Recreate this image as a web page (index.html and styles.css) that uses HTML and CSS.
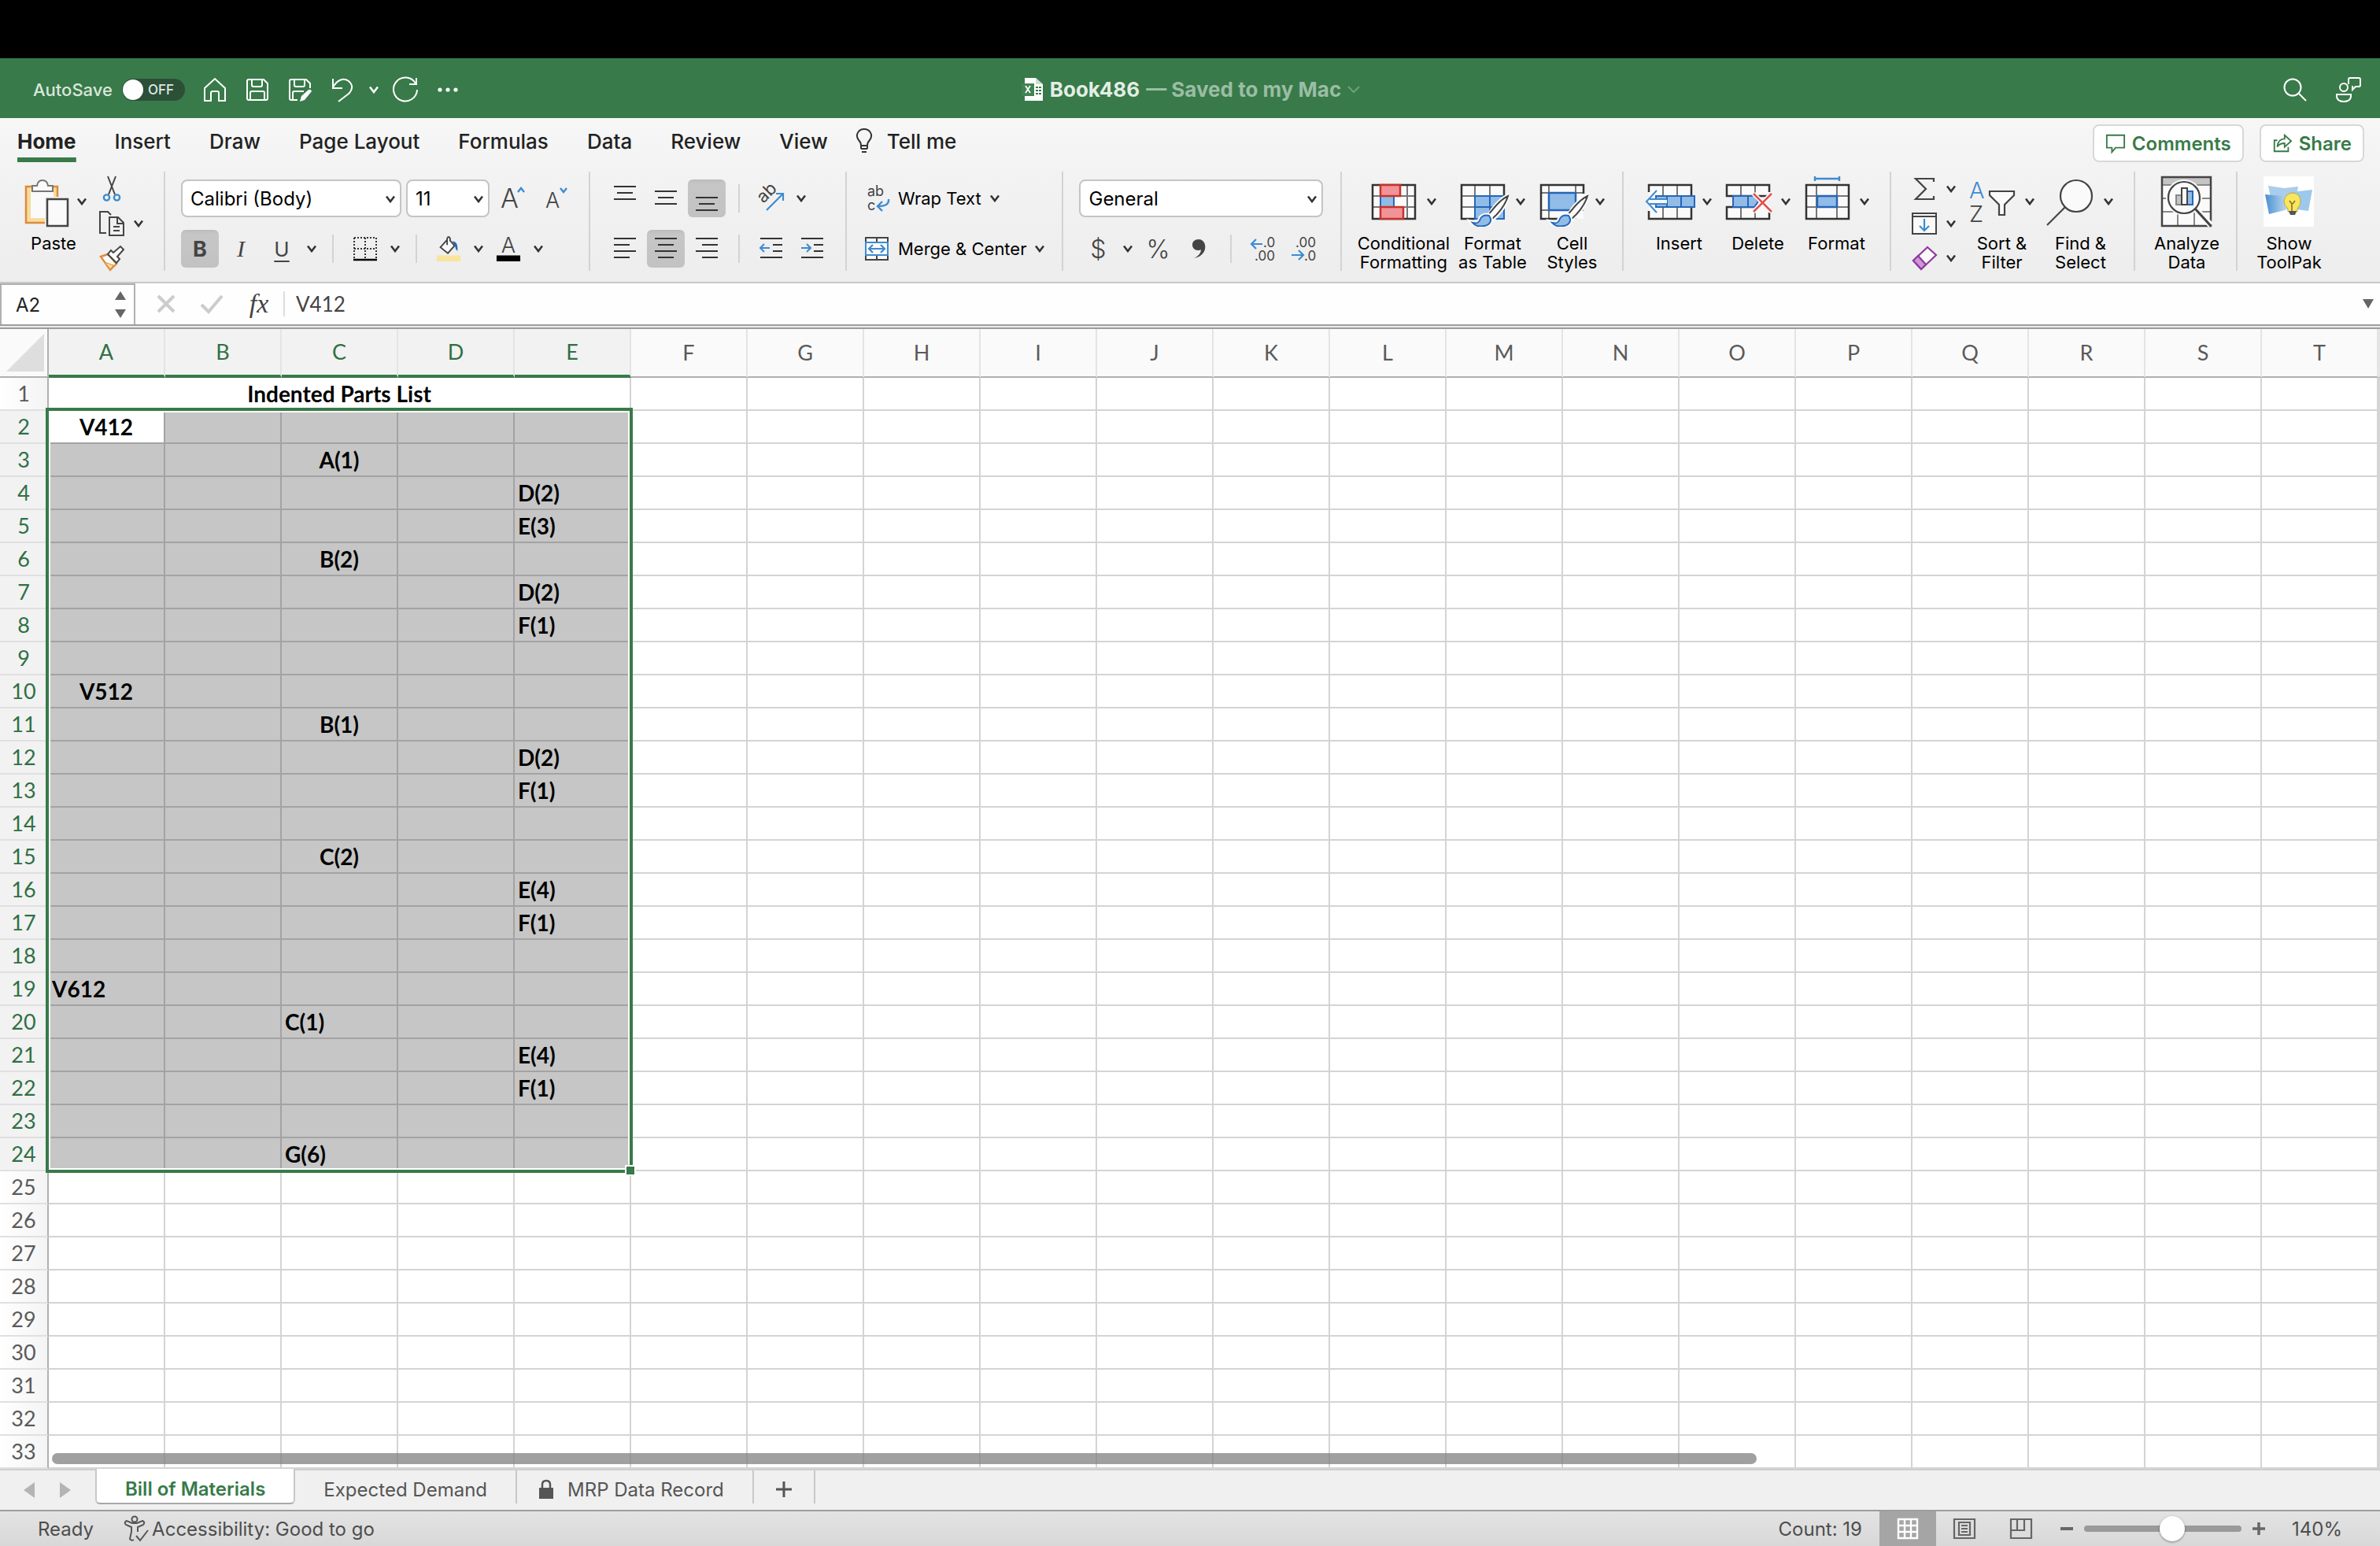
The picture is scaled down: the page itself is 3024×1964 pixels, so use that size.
FILE: index.html
```html
<!DOCTYPE html>
<html lang="en">
<head>
  <meta charset="UTF-8">
  <meta name="viewport" content="width=device-width, initial-scale=1.0">
  <title>Book486</title>
  <link rel="stylesheet" href="styles.css">
</head>
<body>
<svg class="defs" aria-hidden="true">
  <symbol id="chev" viewBox="0 0 12 10"><path d="M1 1.5 6 8 11 1.5" fill="none" stroke="currentColor" stroke-width="2.6"/></symbol>
  <symbol id="brush" viewBox="0 0 64 64">
    <path d="M62 25C52 30 44 40 38 50l5 4C51 46 59 36 62 25z" fill="#fafafa" stroke="#fafafa" stroke-width="6"/>
    <path d="M62 25C53 29 45 39 37 49l5 5C51 46 59 35 62 25z" fill="#fafafa" stroke="#444" stroke-width="2"/>
    <path d="M38 50c-7-2-11 2-12 6-1 3-5 4-9 3 4 5 10 5 15 4 6-1 11-6 6-13z" fill="#91bce8" stroke="#fafafa" stroke-width="6"/>
    <path d="M38 50c-7-2-11 2-12 6-1 3-5 4-9 3 4 5 10 5 15 4 6-1 11-6 6-13z" fill="#91bce8" stroke="#2666b8" stroke-width="2"/>
  </symbol>
</svg>

<div class="notch"></div>
<header class="titlebar">
  <div class="quick">
    <span class="autosave" id="autosave-label">AutoSave</span>
    <button class="toggle" aria-labelledby="autosave-label"><i class="knob"></i>OFF</button>
    <button class="qbtn" aria-label="Home"><svg viewBox="0 0 32 32"><path d="M3 30V14L16 2l13 12v16h-8V20q0-2-2-2h-6q-2 0-2 2v10z"/></svg></button>
    <button class="qbtn" aria-label="Save"><svg viewBox="0 0 32 32"><path d="M5 3h19l5 5v19q0 2-2 2H5q-2 0-2-2V5q0-2 2-2zM9 3v7q0 2 2 2h9q2 0 2-2V3M7 29V20q0-2 2-2h14q2 0 2 2v9"/></svg></button>
    <button class="qbtn" aria-label="Save as"><svg viewBox="0 0 32 32"><path d="M13 29H5q-2 0-2-2V5q0-2 2-2h19l5 5v6M9 3v7q0 2 2 2h9q2 0 2-2V3M7 29V20q0-2 2-2h12"/><path d="M16 31l2-7 9-8q3-1 4 2l-9 11z" fill="#fff" stroke="none"/></svg></button>
    <button class="qbtn" aria-label="Undo"><svg viewBox="0 0 32 32"><path d="M4 2v12h12M4 13C9 4 17 0 24 5c6 5 5 11 0 16L11 31"/></svg></button>
    <button class="qchev" aria-label="Undo history"><svg class="chev"><use href="#chev"/></svg></button>
    <button class="qbtn" aria-label="Redo"><svg viewBox="0 0 32 32"><path d="M21 9h9V1M29 8A15 15 0 1 0 31 16"/></svg></button>
    <button class="qbtn" aria-label="More"><svg viewBox="0 0 32 32"><g fill="#fff" stroke="none"><circle cx="6" cy="16" r="2.6"/><circle cx="16" cy="16" r="2.6"/><circle cx="26" cy="16" r="2.6"/></g></svg></button>
  </div>
  <div class="doc">
    <svg class="docicon" viewBox="0 0 28 32"><path d="M4 1h14l9 8v21H4z" fill="#fff"/><path d="M18 1v8h9z" fill="#cfdcd2"/><path d="M0 8h16v16H0z" fill="#3f8452"/><path d="M5 11l6 9M11 11l-6 9" stroke="#fff" stroke-width="1.8"/><path d="M18 12h3v2h-3zM22 12h3v2h-3zM18 16h3v2h-3zM22 16h3v2h-3zM18 20h3v2h-3zM22 20h3v2h-3z" fill="#387a49"/></svg>
    <span class="docname">Book486</span>
    <span class="saved">— Saved to my Mac</span>
    <svg class="savedchev" viewBox="0 0 16 10"><path d="M1 1 8 8 15 1" fill="none" stroke="currentColor" stroke-width="2"/></svg>
  </div>
  <div class="right">
    <button class="qbtn" aria-label="Search"><svg viewBox="0 0 32 32"><circle cx="13" cy="13" r="10.5"/><path d="M21 21l9 9"/></svg></button>
    <button class="qbtn" aria-label="Collaboration"><svg viewBox="0 0 32 32"><circle cx="10" cy="13" r="5"/><path d="M1 22h18v3q-1 6-9 6t-9-6zM18 1h11q2 0 2 2v7q0 2-2 2h-4l-4 4v-4h-1M16 9V3q0-2 2-2"/></svg></button>
  </div>
</header>

<nav class="tabs">
  <button class="tab on">Home</button>
  <button class="tab">Insert</button>
  <button class="tab">Draw</button>
  <button class="tab">Page Layout</button>
  <button class="tab">Formulas</button>
  <button class="tab">Data</button>
  <button class="tab">Review</button>
  <button class="tab">View</button>
  <button class="tab tell"><svg viewBox="0 0 22 32"><path d="M7 22q0-4-3-7C-1 8 4 1 11 1s12 7 7 14q-3 3-3 7zM7 26h8M7 22v4M15 22v4M8 30h6" fill="none" stroke="#333" stroke-width="2"/></svg>Tell me</button>
  <div class="tabactions">
    <button class="pill"><svg viewBox="0 0 28 28"><path d="M2 3h24v17H14l-5 6v-6H2z"/></svg>Comments</button>
    <button class="pill"><svg viewBox="0 0 28 28"><path d="M7 10H3v15h19v-6M17 3l9 8-9 8v-5q-7 0-10 5 1-11 10-11z"/></svg>Share</button>
  </div>
</nav>

<section class="ribbon">
  <div class="group">
    <button class="big w96">
      <span class="pic"><svg viewBox="0 0 64 64"><path d="M7 13h40v46H7z" fill="#f6dd9c" stroke="#df8a3c" stroke-width="2.5"/><path d="M13 19h29v34H13z" fill="#fafafa"/><path d="M15 12h6q1-7 7-7t7 7h6v7H15z" fill="#fafafa" stroke="#777" stroke-width="2"/><path d="M31 26h31v38H31z" fill="#f2f2f2"/><path d="M34 29h26v34H34z" fill="#fafafa" stroke="#444" stroke-width="2.5"/></svg><svg class="chev"><use href="#chev"/></svg></span>
      Paste
    </button>
    <div class="stack">
      <button class="mini" aria-label="Cut"><svg viewBox="0 0 32 32"><path d="M11 0l9 23M21 0l-9 23" fill="none" stroke="#444" stroke-width="2"/><g fill="none" stroke="#3e8bd0" stroke-width="2.4"><circle cx="9.5" cy="27" r="3.6"/><circle cx="22.5" cy="27" r="3.6"/></g></svg></button>
      <button class="mini" aria-label="Copy"><svg viewBox="0 0 32 32"><path d="M9 28H1V1h10l4 4M13 8h11l7 7v16H13zM23 8v8h8M18 20h8M18 25h8" fill="none" stroke="#444" stroke-width="2"/></svg><svg class="chev"><use href="#chev"/></svg></button>
      <button class="mini" aria-label="Format painter"><svg viewBox="0 0 32 32"><path d="M2 14l9-3 11 12-8 8z" fill="#fafafa" stroke="#df8a3c" stroke-width="2.4"/><path d="M7 21l11 4-4 5z" fill="#f6dd9c" stroke="#df8a3c"/><path d="M11 11L22 22l4-5-3-3 8-9-4-4-9 8-3-3z" fill="#fafafa" stroke="#444" stroke-width="2"/></svg></button>
    </div>
  </div>

  <div class="group">
    <div class="rows">
      <div class="row fields">
        <span class="field font"><select aria-label="Font"><option>Calibri (Body)</option></select><svg class="chev"><use href="#chev"/></svg></span>
        <span class="field size"><select aria-label="Font size"><option>11</option></select><svg class="chev"><use href="#chev"/></svg></span>
        <button class="btn" aria-label="Increase font size"><svg viewBox="0 0 32 32"><text x="0" y="28" font-size="34" font-weight="300" fill="#444">A</text><path d="M22 8l4-5 4 5" fill="none" stroke="#3e8bd0" stroke-width="2.4"/></svg></button>
        <button class="btn" aria-label="Decrease font size"><svg viewBox="0 0 32 32"><text x="3" y="28" font-size="27" font-weight="300" fill="#444">A</text><path d="M22 3l4 5 4-5" fill="none" stroke="#3e8bd0" stroke-width="2.4"/></svg></button>
      </div>
      <div class="row">
        <button class="btn pressed bold">B</button>
        <button class="btn italic">I</button>
        <button class="btn under">U</button>
        <button class="drop" aria-label="Underline style"><svg class="chev"><use href="#chev"/></svg></button>
        <i class="bar"></i>
        <button class="btn" aria-label="Borders"><svg viewBox="0 0 32 32"><path d="M2 2h28M2 16h28M2 2v26M16 2v26M30 2v26" fill="none" stroke="#333" stroke-width="2" stroke-dasharray="2 2"/><path d="M1 30h30" stroke="#000" stroke-width="2.5"/></svg></button>
        <button class="drop" aria-label="Border style"><svg class="chev"><use href="#chev"/></svg></button>
        <i class="bar"></i>
        <button class="btn" aria-label="Fill color"><svg viewBox="0 0 32 34"><path d="M14 5L5 15l10 8 9-10-6-7V3q-2-4-4 0v9" fill="#fafafa" stroke="#444" stroke-width="2"/><path d="M21 7q8 0 7 13-3-2-3-6z" fill="#2666b8"/><path d="M0 26h32v8H0z" fill="#f9e49c"/></svg></button>
        <button class="drop" aria-label="Fill colors"><svg class="chev"><use href="#chev"/></svg></button>
        <button class="btn" aria-label="Font color"><svg viewBox="0 0 32 34"><text x="16" y="22" font-size="29" font-weight="300" text-anchor="middle" fill="#444">A</text><path d="M0 26h32v8H0z" fill="#000"/></svg></button>
        <button class="drop" aria-label="Font colors"><svg class="chev"><use href="#chev"/></svg></button>
      </div>
    </div>
  </div>

  <div class="group">
    <div class="rows">
      <div class="row">
        <button class="btn lines" aria-label="Top align"><svg viewBox="0 0 32 32"><path d="M2 1h28M6 9h20M2 17h28"/></svg></button>
        <button class="btn lines" aria-label="Middle align"><svg viewBox="0 0 32 32"><path d="M2 7h28M6 15h20M2 23h28"/></svg></button>
        <button class="btn lines pressed" aria-label="Bottom align"><svg viewBox="0 0 32 32"><path d="M2 15h28M6 23h20M2 31h28"/></svg></button>
        <i class="bar"></i>
        <button class="btn" aria-label="Orientation"><svg viewBox="0 0 32 32"><text x="0" y="0" font-size="22" fill="#444" transform="translate(6 23) rotate(-45)">ab</text><path d="M10 31L30 11M22 10h9v9" fill="none" stroke="#3e8bd0" stroke-width="2.2"/></svg></button>
        <button class="drop" aria-label="Orientation options"><svg class="chev"><use href="#chev"/></svg></button>
      </div>
      <div class="row">
        <button class="btn lines" aria-label="Align left"><svg viewBox="0 0 32 32"><path d="M2 3h28M2 11h20M2 19h28M2 27h20"/></svg></button>
        <button class="btn lines pressed" aria-label="Center"><svg viewBox="0 0 32 32"><path d="M2 3h28M6 11h20M2 19h28M6 27h20"/></svg></button>
        <button class="btn lines" aria-label="Align right"><svg viewBox="0 0 32 32"><path d="M2 3h28M10 11h20M2 19h28M10 27h20"/></svg></button>
        <i class="bar"></i>
        <button class="btn lines" aria-label="Decrease indent"><svg viewBox="0 0 32 32"><path d="M2 3h28M18 11h12M18 19h12M2 27h28"/><path class="blue" d="M14 15H3M7 10l-5 5 5 5"/></svg></button>
        <button class="btn lines" aria-label="Increase indent"><svg viewBox="0 0 32 32"><path d="M2 3h28M18 11h12M18 19h12M2 27h28"/><path class="blue" d="M2 15h11M9 10l5 5-5 5"/></svg></button>
      </div>
    </div>
  </div>

  <div class="group">
    <div class="rows">
      <button class="wide"><svg viewBox="0 0 32 32"><text x="4" y="13" font-size="18" fill="#444">ab</text><text x="4" y="31" font-size="18" fill="#444">c</text><path d="M31 17q1 9-13 9M23 20l-6 6 6 6" fill="none" stroke="#3e8bd0" stroke-width="2.4"/></svg>Wrap Text<svg class="chev"><use href="#chev"/></svg></button>
      <button class="wide"><svg viewBox="0 0 32 32"><path d="M2 2h28v28H2zM16 2v6M16 24v6" fill="#fafafa" stroke="#444" stroke-width="2"/><path d="M2 8h28v16H2z" fill="#fafafa" stroke="#3e8bd0" stroke-width="2"/><path d="M6 16h20M11 11l-5 5 5 5M21 11l5 5-5 5" fill="none" stroke="#3e8bd0" stroke-width="2.2"/></svg>Merge &amp; Center<svg class="chev"><use href="#chev"/></svg></button>
    </div>
  </div>

  <div class="group numbers">
    <div class="rows">
      <span class="field number"><select aria-label="Number format"><option>General</option></select><svg class="chev"><use href="#chev"/></svg></span>
      <div class="row">
        <button class="btn sign">$</button>
        <button class="drop" aria-label="Currency"><svg class="chev"><use href="#chev"/></svg></button>
        <button class="btn sign">%</button>
        <button class="btn" aria-label="Comma style"><svg viewBox="0 0 32 32"><path d="M16 4c-5 0-8 3-8 7s3 7 7 7q3 0 4-1 0 7-9 11C24 25 25 16 24 11c-1-4-4-7-8-7z" fill="#444"/></svg></button>
        <i class="bar"></i>
        <button class="btn" aria-label="Increase decimal"><svg viewBox="0 0 32 32"><text x="16" y="14" font-size="17" fill="#444">.0</text><text x="5" y="31" font-size="17" fill="#444">.00</text><path d="M15 10H1M7 4l-6 6 6 6" fill="none" stroke="#3e8bd0" stroke-width="2.2"/></svg></button>
        <button class="btn" aria-label="Decrease decimal"><svg viewBox="0 0 32 32"><text x="5" y="14" font-size="17" fill="#444">.00</text><text x="16" y="31" font-size="17" fill="#444">.0</text><path d="M0 24h15M9 18l6 6-6 6" fill="none" stroke="#3e8bd0" stroke-width="2.2"/></svg></button>
      </div>
    </div>
  </div>

  <div class="group">
    <button class="big w116">
      <span class="pic"><svg viewBox="0 0 64 64"><path d="M3 11h54v43H3z" fill="#fafafa"/><path d="M3 25h54M3 39h54M13 11v43M47 11v43" stroke="#777" stroke-width="2"/><path d="M3 11h54v43H3z" fill="none" stroke="#333" stroke-width="2.5"/><path d="M13 25h17v14H13z" fill="#91bce8" stroke="#2666b8" stroke-width="2"/><path d="M31 26h11v12H31z" fill="#fafafa"/><path d="M13 11h25v14H13zM13 39h29v15H13z" fill="#f19499" stroke="#c8322a" stroke-width="2.5"/></svg><svg class="chev"><use href="#chev"/></svg></span>
      Conditional<br>Formatting
    </button>
    <button class="big w110">
      <span class="pic"><svg viewBox="0 0 64 64"><path d="M3 11h54v43H3z" fill="#fafafa"/><path d="M20 25h37v29H20z" fill="#91bce8"/><path d="M3 25h17M3 39h17M20 11v14M39 11v14" stroke="#777" stroke-width="2"/><path d="M20 54H3V11h54v14" fill="none" stroke="#333" stroke-width="2.5"/><path d="M57 25H20v29h37zM20 39h37M39 25v29" fill="none" stroke="#2666b8" stroke-width="2"/><use href="#brush"/></svg><svg class="chev"><use href="#chev"/></svg></span>
      Format<br>as Table
    </button>
    <button class="big w92">
      <span class="pic"><svg viewBox="0 0 64 64"><path d="M3 11h54v43H3z" fill="#fafafa"/><path d="M3 21h54M3 43h54M13 11v43M47 11v43" stroke="#777" stroke-width="2"/><path d="M57 22V11H3v43h24" fill="none" stroke="#333" stroke-width="2.5"/><path d="M13 21h34v22H13z" fill="#91bce8" stroke="#2666b8" stroke-width="2.5"/><use href="#brush"/></svg><svg class="chev"><use href="#chev"/></svg></span>
      Cell<br>Styles
    </button>
  </div>

  <div class="group">
    <button class="big">
      <span class="pic"><svg viewBox="0 0 64 64"><path d="M4 11h54v43H4z" fill="#fafafa"/><path d="M22 11v43M40 11v43" stroke="#777" stroke-width="2"/><path d="M4 20v-9h54v14M4 44v10h54V39" fill="none" stroke="#333" stroke-width="2.5"/><path d="M13 25h49v14H13z" fill="#91bce8" stroke="#2666b8" stroke-width="2"/><path d="M27 25v14M45 25v14" stroke="#2666b8" stroke-width="2"/><path d="M27 32H4" stroke="#fafafa" stroke-width="8"/><path d="M27 29H5M27 35H5M14 18L1 32l13 14" fill="none" stroke="#3e8bd0" stroke-width="2"/></svg><svg class="chev"><use href="#chev"/></svg></span>
      Insert
    </button>
    <button class="big">
      <span class="pic"><svg viewBox="0 0 64 64"><path d="M3 11h54v43H3z" fill="#fafafa"/><path d="M21 11v43M39 11v43" stroke="#777" stroke-width="2"/><path d="M0 26h64v12H0z" fill="#f2f2f2"/><path d="M57 20v-9H3v14h54M57 46v8H3V39h36" fill="none" stroke="#333" stroke-width="2.5"/><path d="M11 25h27l5 7-5 7H11zM30 25v14" fill="#91bce8" stroke="#2666b8" stroke-width="2"/><path d="M37 22l23 23M60 22L37 45" stroke="#fafafa" stroke-width="6"/><path d="M37 22l23 23M60 22L37 45" stroke="#e2504a" stroke-width="2.5"/></svg><svg class="chev"><use href="#chev"/></svg></span>
      Delete
    </button>
    <button class="big">
      <span class="pic"><svg viewBox="0 0 64 64"><path d="M4 11h54v43H4z" fill="#fafafa"/><path d="M4 25h54M4 39h54M17 11v43M43 11v43" stroke="#777" stroke-width="2"/><path d="M4 11h54v43H4z" fill="none" stroke="#333" stroke-width="2.5"/><path d="M18 25h25v14H18z" fill="#91bce8" stroke="#2666b8" stroke-width="2.5"/><path d="M15 3h31M15 0v6M46 0v6" stroke="#3e8bd0" stroke-width="2.4"/></svg><svg class="chev"><use href="#chev"/></svg></span>
      Format
    </button>
  </div>

  <div class="group">
    <div class="stack">
      <button class="mini" aria-label="AutoSum"><svg viewBox="0 0 32 32"><path d="M28 7V3H5l13 13L5 29h23v-4" fill="none" stroke="#444" stroke-width="2.2"/></svg><svg class="chev"><use href="#chev"/></svg></button>
      <button class="mini" aria-label="Fill"><svg viewBox="0 0 32 32"><path d="M1 3h30v26H1zM1 7h30" fill="#fafafa" stroke="#444" stroke-width="2"/><path d="M16 10v15M10 19l6 6 6-6" fill="none" stroke="#3e8bd0" stroke-width="2.2"/></svg><svg class="chev"><use href="#chev"/></svg></button>
      <button class="mini" aria-label="Clear"><svg viewBox="0 0 32 32"><path d="M20 2l11 10-19 18L2 19z" fill="#fafafa" stroke="#8e3a9d" stroke-width="2.2"/><path d="M8 13l10 11-6 6L2 19z" fill="#cf95d8" stroke="#8e3a9d" stroke-width="2.2"/></svg><svg class="chev"><use href="#chev"/></svg></button>
    </div>
    <button class="big">
      <span class="pic"><svg viewBox="0 0 64 64"><text x="1" y="28" font-size="29" font-weight="300" fill="#3e8bd0">A</text><text x="1" y="58" font-size="29" font-weight="300" fill="#444">Z</text><path d="M27 19h31v5L46 36v13h-7V36L27 24z" fill="#fafafa" stroke="#444" stroke-width="2.2"/></svg><svg class="chev"><use href="#chev"/></svg></span>
      Sort &amp;<br>Filter
    </button>
    <button class="big">
      <span class="pic"><svg viewBox="0 0 64 64"><circle cx="37" cy="25" r="20" fill="#fafafa" stroke="#444" stroke-width="2.2"/><path d="M23 39L0 62" stroke="#444" stroke-width="2.2"/></svg><svg class="chev"><use href="#chev"/></svg></span>
      Find &amp;<br>Select
    </button>
  </div>

  <div class="group">
    <button class="big w90">
      <span class="pic"><svg viewBox="0 0 64 64"><path d="M1 1h62v62H1z" fill="#fafafa"/><path d="M1 1h62v10H1z" fill="#c4c4c4"/><path d="M1 11h62M1 28h62M1 45h62M21 45v18M42 45v18" stroke="#888" stroke-width="2"/><path d="M1 1h62v62H1z" fill="none" stroke="#444" stroke-width="2.5"/><circle cx="29" cy="27" r="23" fill="#fafafa"/><path d="M44 42l19 20" stroke="#fafafa" stroke-width="8"/><path d="M43 41l20 22" stroke="#444" stroke-width="3"/><circle cx="29" cy="27" r="20" fill="#fafafa" stroke="#444" stroke-width="2.2"/><path d="M19 24h7v12h-7z" fill="#c4c4c4" stroke="#888" stroke-width="2"/><path d="M33 19h7v17h-7z" fill="#91bce8" stroke="#2666b8" stroke-width="2"/><path d="M26 15h7v21h-7z" fill="#fafafa" stroke="#444" stroke-width="2"/></svg></span>
      Analyze<br>Data
    </button>
  </div>

  <div class="group last">
    <button class="big w90">
      <span class="pic"><svg viewBox="0 0 64 64"><defs><linearGradient id="tp" x1="0" x2="1"><stop offset="0" stop-color="#4a90d0"/><stop offset="1" stop-color="#cfe4f5"/></linearGradient></defs><path d="M0 0h64v64H0z" fill="#fff"/><path d="M6 12l20 3 18-2-3 16-32-2z" fill="#a9cdec"/><path d="M36 20l26-3-5 27-22-3z" fill="#9cc8ec"/><path d="M2 23l32 3-3 16-24 6z" fill="url(#tp)"/><path d="M37 21q10 1 10 11 0 5-4 9v4H31v-4q-5-4-5-9 1-10 11-11z" fill="#f7e75e" stroke="#c9a63c"/><path d="M33 31l3 4v9M40 31l-3 4" fill="none" stroke="#8b6a1f" stroke-width="1.5"/><path d="M32 44h10l-2 5h-6z" fill="#555"/></svg></span>
      Show<br>ToolPak
    </button>
  </div>
</section>

<section class="formula">
  <div class="namebox">
    <input value="A2" aria-label="Name box">
    <svg viewBox="0 0 14 34"><path d="M7 0l7 11H0zM7 34l7-11H0z" fill="#666"/></svg>
  </div>
  <button class="fbtn" aria-label="Cancel"><svg viewBox="0 0 28 28"><path d="M4 4l20 20M24 4L4 24" stroke="#ccc" stroke-width="4"/></svg></button>
  <button class="fbtn" aria-label="Enter"><svg viewBox="0 0 28 28"><path d="M1 15l9 9L27 4" fill="none" stroke="#ccc" stroke-width="4"/></svg></button>
  <button class="fbtn fx">fx</button>
  <input class="entry" value="V412" aria-label="Formula bar">
  <button class="expand" aria-label="Expand formula bar"><svg viewBox="0 0 14 12"><path d="M0 0h14L7 12z" fill="#666"/></svg></button>
</section>

<main class="sheet">
  <table class="grid" id="grid"></table>
  <div class="selection"><i></i></div>
  <div class="scroll"></div>
</main>

<nav class="sheets">
  <div class="arrows">
    <button aria-label="Previous sheet"><svg viewBox="0 0 14 20"><path d="M14 0v20L0 10z" fill="#b4b4b4"/></svg></button>
    <button aria-label="Next sheet"><svg viewBox="0 0 14 20"><path d="M0 0v20l14-10z" fill="#b4b4b4"/></svg></button>
  </div>
  <button class="sheettab on">Bill of Materials</button>
  <button class="sheettab">Expected Demand</button>
  <button class="sheettab lock"><svg viewBox="0 0 18 24"><path d="M0 10h18v14H0z" fill="#555"/><path d="M4 11V6q0-5 5-5t5 5v5" fill="none" stroke="#555" stroke-width="2.5"/></svg>MRP Data Record</button>
  <button class="sheettab add" aria-label="Add sheet"><svg viewBox="0 0 22 22"><path d="M11 1v20M1 11h20" stroke="#555" stroke-width="3"/></svg></button>
</nav>

<footer class="status">
  <span class="ready">Ready</span>
  <button class="access"><svg viewBox="0 0 32 32"><g fill="none" stroke="#555" stroke-width="2"><circle cx="14" cy="4" r="3.5"/><path d="M13 30q-3 2-5-1l2-9v-6l-7-3q-3-3 1-5l7 3h6l7-3q4 2 1 5l-7 3v6M16 25l5 6L31 18"/></g></svg>Accessibility: Good to go</button>
  <span class="count">Count: 19</span>
  <button class="view on" aria-label="Normal view"><svg viewBox="0 0 28 28"><path d="M2 2h24v24H2zM2 10h24M2 18h24M10 2v24M18 2v24" fill="none" stroke="#fff" stroke-width="2.4"/></svg></button>
  <button class="view" aria-label="Page layout view"><svg viewBox="0 0 28 28"><path d="M1 2h26v24H1zM7 6h14v16H7zM10 10h8M10 14h8M10 18h8" fill="none" stroke="#666" stroke-width="2.2"/></svg></button>
  <button class="view" aria-label="Page break view"><svg viewBox="0 0 28 28"><path d="M1 2h26v24H1zM1 16h17V2M9 2v14" fill="none" stroke="#666" stroke-width="2.2"/></svg></button>
  <div class="zoom">
    <button aria-label="Zoom out"><svg viewBox="0 0 16 16"><path d="M0 8h16" stroke="#666" stroke-width="4"/></svg></button>
    <input type="range" min="0" max="100" value="57" aria-label="Zoom">
    <button aria-label="Zoom in"><svg viewBox="0 0 16 16"><path d="M0 8h16M8 0v16" stroke="#666" stroke-width="3.5"/></svg></button>
  </div>
  <span class="percent">140%</span>
</footer>
<script src="script.js"></script>
</body>
</html>
```

FILE: styles.css
```css
* {
  box-sizing: border-box;
}
body {
  margin: 0;
  min-height: 100vh;
  display: flex;
  flex-direction: column;
  font-family: Inter, "Liberation Sans", sans-serif;
  font-size: 22px;
  color: #222;
  background: #fff;
}
button, input, select {
  font: inherit;
  color: inherit;
  border: none;
  background: none;
  padding: 0;
  margin: 0;
}
button {
  cursor: pointer;
  display: flex;
  align-items: center;
  justify-content: center;
  white-space: nowrap;
}
svg {
  flex: none;
  display: block;
  overflow: visible;
}
.defs {
  position: absolute;
  width: 0;
  height: 0;
}
.chev {
  width: 12px;
  height: 10px;
  color: #333;
}
.notch {
  height: 74px;
  background: #000;
}

/* title bar */
.titlebar {
  height: 76px;
  display: flex;
  align-items: center;
  padding-top: 3px;
  background: #387a49;
  color: #fff;
}
.quick, .right {
  flex: 1;
  display: flex;
  align-items: center;
  gap: 22px;
}
.quick {
  padding-left: 42px;
}
.autosave {
  font-weight: 500;
  color: #d9e7dc;
  margin-right: -10px;
}
.toggle {
  width: 80px;
  height: 28px;
  border-radius: 14px;
  background: #2c4f37;
  font-size: 17px;
  font-weight: 500;
  color: #dfe8e1;
  justify-content: flex-start;
  gap: 6px;
  padding-left: 1px;
}
.knob {
  width: 26px;
  height: 26px;
  border-radius: 50%;
  background: #fff;
}
.qbtn svg {
  width: 32px;
  height: 32px;
  fill: none;
  stroke: #fff;
  stroke-width: 2;
}
.qchev {
  margin: 0 -4px;
}
.qchev .chev {
  color: #fff;
}
.doc {
  display: flex;
  align-items: center;
  gap: 8px;
  padding-right: 16px;
  font-size: 26px;
  font-weight: 700;
}
.docicon {
  width: 28px;
  height: 32px;
}
.docname {
  color: #e3eee5;
}
.saved {
  color: #9bbda4;
}
.savedchev {
  width: 16px;
  height: 10px;
  color: #6f9f7b;
}
.right {
  justify-content: flex-end;
  gap: 36px;
  padding-right: 24px;
}

/* ribbon tabs */
.tabs {
  height: 62px;
  display: flex;
  align-items: stretch;
  gap: 49px;
  padding-left: 22px;
  background: linear-gradient(#f7f7f7, #f3f3f3);
  font-size: 26px;
  font-weight: 500;
}
.tab {
  height: 56px;
  padding-top: 2px;
}
.tab.on {
  font-weight: 700;
  background: linear-gradient(#387a49, #387a49) bottom / 100% 6px no-repeat;
}
.tell {
  gap: 18px;
  margin-left: -14px;
}
.tell svg {
  width: 22px;
  height: 32px;
}
.tabactions {
  margin-left: auto;
  padding: 8px 20px 0 0;
  display: flex;
  gap: 20px;
}
.pill {
  height: 48px;
  padding: 0 14px;
  gap: 8px;
  background: #fff;
  border: 2px solid #d8d8d8;
  border-radius: 8px;
  color: #387a49;
  font-size: 24px;
  font-weight: 600;
}
.pill svg {
  width: 26px;
  height: 26px;
  fill: none;
  stroke: #387a49;
  stroke-width: 2;
}

/* ribbon */
.ribbon {
  display: flex;
  padding: 6px 0 14px;
  background: linear-gradient(#f3f3f3, #ededed);
  border-bottom: 2px solid #c8c8c8;
  color: #000;
}
.group {
  display: flex;
  height: 126px;
  padding: 0 18px 0 20px;
  border-right: 2px solid #d3d3d3;
}
.group.last {
  border-right: none;
}
.group.numbers {
  padding-right: 22px;
}
.big {
  width: 100px;
  flex-direction: column;
  justify-content: flex-start;
  padding-top: 6px;
  line-height: 24px;
}
.big.w116 {
  width: 116px;
}
.big.w110 {
  width: 110px;
}
.big.w96 {
  width: 96px;
  margin-right: 4px;
}
.big.w92 {
  width: 92px;
}
.big.w90 {
  width: 90px;
}
.pic {
  display: flex;
  align-items: center;
  gap: 8px;
  margin-bottom: 9px;
}
.pic svg:first-child {
  width: 64px;
  height: 64px;
}
.stack {
  display: flex;
  flex-direction: column;
  gap: 12px;
  padding: 6px 8px 0 6px;
}
.mini {
  width: 56px;
  height: 32px;
  gap: 12px;
  justify-content: flex-start;
}
.mini svg:first-child {
  width: 32px;
  height: 32px;
}
.rows {
  display: flex;
  flex-direction: column;
  gap: 16px;
  padding-top: 10px;
}
.row {
  display: flex;
  align-items: center;
  gap: 4px;
  height: 48px;
}
.row.fields {
  gap: 6px;
}
.btn {
  width: 48px;
  height: 48px;
  border-radius: 6px;
  color: #444;
}
.btn svg {
  width: 32px;
  height: 32px;
}
.pressed {
  background: linear-gradient(#bcbcbc, #c6c6c6 6px, #c2c2c2);
}
.drop {
  width: 20px;
  height: 48px;
}
.bar {
  width: 2px;
  height: 36px;
  margin: 0 12px;
  background: #d3d3d3;
}
.bold {
  font-size: 27px;
  font-weight: 700;
}
.italic {
  font-family: "Liberation Serif", serif;
  font-size: 30px;
  font-style: italic;
}
.under {
  font-size: 26px;
  text-decoration: underline;
  text-underline-offset: 5px;
}
.sign {
  font-size: 32px;
  font-weight: 300;
}
.lines path {
  fill: none;
  stroke: #333;
  stroke-width: 2;
}
.lines .blue {
  stroke: #3e8bd0;
}
.field {
  position: relative;
  height: 48px;
  font-size: 24px;
}
.field select {
  appearance: none;
  width: 100%;
  height: 100%;
  padding: 0 10px;
  background: #fff;
  border: 2px solid #c4c4c4;
  border-radius: 8px;
}
.field .chev {
  position: absolute;
  right: 8px;
  top: 20px;
  pointer-events: none;
}
.font {
  width: 280px;
}
.size {
  width: 106px;
}
.number {
  width: 310px;
}
.wide {
  height: 48px;
  padding: 0 4px 0 2px;
  gap: 11px;
  justify-content: flex-start;
}
.wide svg:first-child {
  width: 32px;
  height: 32px;
}

/* formula bar */
.formula {
  height: 58px;
  display: flex;
  align-items: center;
  padding-bottom: 6px;
  background: linear-gradient(#9d9d9d, #9d9d9d) bottom / 100% 2px no-repeat, linear-gradient(#9d9d9d 2px, #ececec 2px) bottom / 100% 6px no-repeat, #fefefe;
}
.namebox {
  width: 172px;
  height: 52px;
  display: flex;
  align-items: center;
  border: 2px solid #b0b0b0;
  border-bottom: none;
  padding: 0 10px 0 18px;
}
.namebox input {
  flex: 1;
  min-width: 0;
  font-size: 24px;
}
.namebox svg {
  width: 14px;
  height: 34px;
}
.fbtn {
  width: 58px;
  height: 48px;
}
.fbtn:nth-child(2) {
  margin-left: 10px;
}
.fbtn svg {
  width: 28px;
  height: 28px;
}
.fx {
  width: 62px;
  font-family: "Liberation Serif", serif;
  font-style: italic;
  font-size: 34px;
  color: #444;
}
.entry {
  flex: 1;
  height: 32px;
  padding-left: 14px;
  border-left: 2px solid #ddd;
  font-family: Lato, sans-serif;
  font-size: 26px;
  color: #444;
}
.expand {
  width: 30px;
}
.expand svg {
  width: 14px;
  height: 12px;
}

/* grid */
.sheet {
  flex: 1;
  position: relative;
  overflow: hidden;
  font-family: Lato, Carlito, sans-serif;
}
.grid {
  table-layout: fixed;
  width: 100%;
  border-collapse: separate;
  border-spacing: 0;
}
.grid th, .grid td {
  height: 42px;
  padding: 0;
  border-right: 2px solid #d4d4d4;
  border-bottom: 2px solid #d4d4d4;
  line-height: 40px;
  white-space: nowrap;
}
.grid col {
  width: 148px;
}
.grid col:first-child {
  width: 62px;
}
.grid col:last-child {
  width: auto;
}
.grid th {
  font-size: 27px;
  font-weight: 400;
  color: #5a5a5a;
}
.grid thead th {
  height: 62px;
  background: #fafafa;
  border-right-color: #e4e4e4;
  border-bottom-color: #b0b0b0;
}
.grid thead th.sel {
  background: #f2f2f2;
  border-bottom: 4px solid #387a49;
  color: #2f7044;
}
.grid thead th.corner {
  background: #fafafa;
  border-right-color: #b0b0b0;
}
.corner svg {
  width: 48px;
  height: 48px;
  margin-left: 8px;
}
.grid tbody th {
  background: linear-gradient(90deg, #fff, #f4f4f4);
  border-right-color: #b0b0b0;
  border-bottom-color: #e0e0e0;
}
.grid tbody th.sel {
  background: #f2f2f2;
  color: #2f7044;
}
.grid td {
  font-size: 28px;
  font-weight: 700;
  color: #000;
  padding-left: 4px;
}
.grid td.center {
  text-align: center;
  padding-left: 0;
}
.grid td.sel {
  background: #c6c6c6;
  border-color: #a3a3a3;
}
.grid td.active {
  background: #fff;
}
.selection {
  position: absolute;
  left: 58px;
  top: 100px;
  width: 746px;
  height: 972px;
  border: 4px solid #387a49;
  box-shadow: inset 0 0 0 2px #fff;
}
.selection i {
  position: absolute;
  right: -8px;
  bottom: -8px;
  width: 14px;
  height: 14px;
  background: #387a49;
  border: 2px solid #fff;
}
.scroll {
  position: absolute;
  left: 66px;
  bottom: 6px;
  width: 72%;
  max-width: 2166px;
  height: 14px;
  border-radius: 7px;
  background: rgba(128, 128, 128, 0.75);
}

/* sheet tabs */
.sheets {
  height: 54px;
  display: flex;
  background: #f0f0f0;
  border-top: 2px solid #cfcfcf;
  border-bottom: 2px solid #9d9d9d;
  font-size: 24px;
  color: #555;
}
.arrows {
  width: 121px;
  display: flex;
  align-items: center;
  gap: 32px;
  padding-left: 30px;
}
.arrows svg {
  width: 14px;
  height: 20px;
}
.sheettab {
  height: 42px;
  padding: 6px 36px 0;
  border-right: 2px solid #c8c8c8;
}
.sheettab.on {
  height: 45px;
  padding-top: 8px;
  margin-top: -2px;
  background: #fff;
  border-left: 2px solid #c8c8c8;
  border-bottom: 2px solid #a8a8a8;
  border-radius: 0 0 6px 6px;
  color: #387a49;
  font-weight: 600;
}
.lock {
  padding-left: 28px;
  gap: 18px;
}
.lock svg {
  width: 18px;
  height: 24px;
}
.add {
  padding: 6px 27px 0;
}
.add svg {
  width: 22px;
  height: 22px;
}

/* status bar */
.status {
  height: 44px;
  display: flex;
  align-items: center;
  background: linear-gradient(#e3e3e3, #d8d8d8);
  font-size: 24px;
  color: #4d4d4d;
}
.ready {
  padding-left: 48px;
  margin-right: 38px;
}
.access {
  gap: 4px;
}
.access svg {
  width: 32px;
  height: 32px;
}
.count {
  margin-left: auto;
  margin-right: 22px;
}
.view {
  width: 72px;
  height: 44px;
}
.view.on {
  background: #a5a5a5;
}
.view svg {
  width: 28px;
  height: 28px;
}
.zoom {
  display: flex;
  align-items: center;
  gap: 14px;
  margin: 0 34px 0 14px;
}
.zoom svg {
  width: 16px;
  height: 16px;
}
.zoom input {
  appearance: none;
  width: 200px;
  height: 8px;
  border-radius: 4px;
  background: #999;
}
.zoom input::-webkit-slider-thumb {
  appearance: none;
  width: 32px;
  height: 32px;
  border-radius: 50%;
  background: #fff;
  box-shadow: 0 1px 3px rgba(0, 0, 0, 0.4);
}
.percent {
  width: 112px;
}
```

FILE: script.js
```js
const columns = "ABCDEFGHIJKLMNOPQRST".split("");
const rowCount = 33;
const selected = { firstRow: 2, lastRow: 24, lastCol: 4 };

const cells = {
  A2: "V412", C3: "A(1)", E4: "D(2)", E5: "E(3)", C6: "B(2)", E7: "D(2)", E8: "F(1)",
  A10: "V512", C11: "B(1)", E12: "D(2)", E13: "F(1)", C15: "C(2)", E16: "E(4)", E17: "F(1)",
  A19: "V612", C20: "C(1)", E21: "E(4)", E22: "F(1)", C24: "G(6)"
};
const centered = ["A2", "C3", "C6", "A10", "C11", "C15"];

function headRow() {
  let html = '<tr><th class="corner"><svg viewBox="0 0 48 48"><path d="M48 0v48H0z" fill="#dedede"/></svg></th>';
  columns.forEach((name, i) => {
    html += `<th class="${i <= selected.lastCol ? "sel" : ""}">${name}</th>`;
  });
  return html + "<th></th></tr>";
}

function bodyRow(row) {
  const inRows = row >= selected.firstRow && row <= selected.lastRow;
  let html = `<tr><th class="${inRows ? "sel" : ""}">${row}</th>`;
  columns.forEach((name, i) => {
    const ref = name + row;
    // row 1 holds the merged title
    if (row === 1 && i <= selected.lastCol) {
      if (i === 0) html += '<td class="center" colspan="5">Indented Parts List</td>';
      return;
    }
    const classes = [];
    if (inRows && i <= selected.lastCol) classes.push("sel");
    if (ref === "A2") classes.push("active");
    if (centered.includes(ref)) classes.push("center");
    html += `<td class="${classes.join(" ")}">${cells[ref] || ""}</td>`;
  });
  return html + "<td></td></tr>";
}

let body = "";
for (let row = 1; row <= rowCount; row++) {
  body += bodyRow(row);
}
document.getElementById("grid").innerHTML =
  "<colgroup>" + "<col>".repeat(columns.length + 2) + "</colgroup>" +
  "<thead>" + headRow() + "</thead><tbody>" + body + "</tbody>";
```
